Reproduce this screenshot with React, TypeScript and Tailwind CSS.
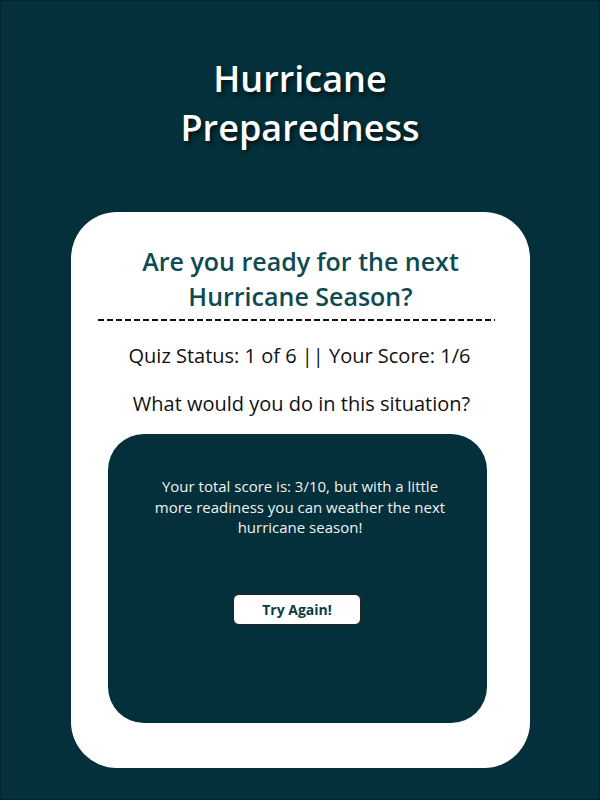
export default function App() {
  return (
    <div className="w-[600px] h-[800px] bg-[#03303a] border border-[#07232a] overflow-hidden font-['Open_Sans',sans-serif]">
      <h1 className="pt-[53px] text-center text-[36px] leading-[49px] font-semibold text-white [text-shadow:2px_3px_4px_rgba(0,0,0,0.6)]">
        Hurricane
        <br />
        Preparedness
      </h1>

      <div className="mt-[60px] ml-[70px] w-[459px] h-[556px] bg-white rounded-[46px] pt-[32px] flex flex-col items-center">
        <h2 className="text-center text-[25px] leading-[35px] font-semibold text-[#0e4a52]">
          Are you ready for the next
          <br />
          Hurricane Season?
        </h2>
        <div className="mt-[5px] ml-[-9px] w-[397px] h-[2px] bg-[repeating-linear-gradient(90deg,#111_0_6px,transparent_6px_9px)]" />

        <p className="mt-[21px] ml-[-2px] text-[20px] leading-[27px] text-[#111]">
          Quiz Status: 1 of 6 || Your Score: 1/6
        </p>
        <p className="mt-[21px] ml-[2px] text-[20px] leading-[27px] text-[#111]">
          What would you do in this situation?
        </p>

        <div className="mt-[17px] ml-[-7px] w-[379px] h-[289px] bg-[#03303a] rounded-[36px] pt-[42px] flex flex-col items-center">
          <p className="ml-[6px] w-[300px] text-center text-[15px] leading-[20.5px] text-[#f2f2f2]">
            Your total score is: 3/10, but with a little more readiness you can weather the next hurricane season!
          </p>
          <button className="mt-[56px] w-[128px] h-[31px] bg-white border-[1.5px] border-[#222] rounded-[6px] text-[14px] font-bold text-[#0e3a42]">
            Try Again!
          </button>
        </div>
      </div>
    </div>
  )
}
